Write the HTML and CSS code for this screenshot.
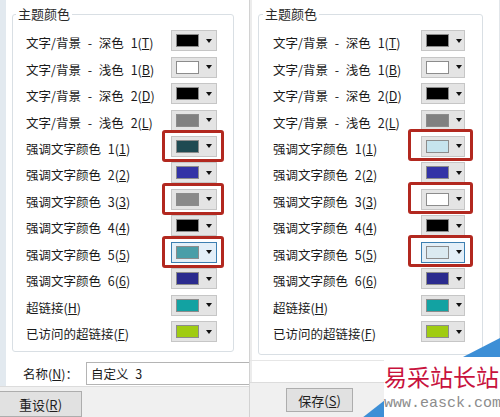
FILE: index.html
```html
<!DOCTYPE html>
<html lang="zh-CN">
<head>
    <meta charset="UTF-8">
    <title>主题颜色</title>
    <link rel="stylesheet" href="styles.css">
</head>
<body>
    <div class="screen">
        <div class="dialog dialog-left">
            <fieldset class="group">
                <legend>主题颜色</legend>
                <div class="row"><span class="label">文字/背景 - 深色 1(<u>T</u>)</span><span class="picker"><span class="chip c-black"></span><span class="arrow"></span></span></div>
                <div class="row"><span class="label">文字/背景 - 浅色 1(<u>B</u>)</span><span class="picker"><span class="chip c-white"></span><span class="arrow"></span></span></div>
                <div class="row"><span class="label">文字/背景 - 深色 2(<u>D</u>)</span><span class="picker"><span class="chip c-black"></span><span class="arrow"></span></span></div>
                <div class="row"><span class="label">文字/背景 - 浅色 2(<u>L</u>)</span><span class="picker"><span class="chip c-gray"></span><span class="arrow"></span></span></div>
                <div class="row"><span class="label">强调文字颜色 1(<u>1</u>)</span><span class="picker marked"><span class="chip c-slate"></span><span class="arrow"></span></span></div>
                <div class="row"><span class="label">强调文字颜色 2(<u>2</u>)</span><span class="picker"><span class="chip c-indigo"></span><span class="arrow"></span></span></div>
                <div class="row"><span class="label">强调文字颜色 3(<u>3</u>)</span><span class="picker marked"><span class="chip c-midgray"></span><span class="arrow"></span></span></div>
                <div class="row"><span class="label">强调文字颜色 4(<u>4</u>)</span><span class="picker"><span class="chip c-black"></span><span class="arrow"></span></span></div>
                <div class="row"><span class="label">强调文字颜色 5(<u>5</u>)</span><span class="picker marked focused"><span class="chip c-aqua"></span><span class="arrow"></span></span></div>
                <div class="row"><span class="label">强调文字颜色 6(<u>6</u>)</span><span class="picker"><span class="chip c-navy"></span><span class="arrow"></span></span></div>
                <div class="row"><span class="label">超链接(<u>H</u>)</span><span class="picker"><span class="chip c-teal"></span><span class="arrow"></span></span></div>
                <div class="row"><span class="label">已访问的超链接(<u>F</u>)</span><span class="picker"><span class="chip c-lime"></span><span class="arrow"></span></span></div>
            </fieldset>
            <div class="name-row">
                <span class="name-label">名称(<u>N</u>)：</span>
                <span class="name-input">自定义 3</span>
            </div>
            <div class="footer">
                <button class="btn btn-reset">重设(<u>R</u>)</button>
            </div>
        </div>

        <div class="dialog dialog-right">
            <fieldset class="group">
                <legend>主题颜色</legend>
                <div class="row"><span class="label">文字/背景 - 深色 1(<u>T</u>)</span><span class="picker"><span class="chip c-black"></span><span class="arrow"></span></span></div>
                <div class="row"><span class="label">文字/背景 - 浅色 1(<u>B</u>)</span><span class="picker"><span class="chip c-white"></span><span class="arrow"></span></span></div>
                <div class="row"><span class="label">文字/背景 - 深色 2(<u>D</u>)</span><span class="picker"><span class="chip c-black"></span><span class="arrow"></span></span></div>
                <div class="row"><span class="label">文字/背景 - 浅色 2(<u>L</u>)</span><span class="picker"><span class="chip c-gray"></span><span class="arrow"></span></span></div>
                <div class="row"><span class="label">强调文字颜色 1(<u>1</u>)</span><span class="picker marked"><span class="chip c-ice"></span><span class="arrow"></span></span></div>
                <div class="row"><span class="label">强调文字颜色 2(<u>2</u>)</span><span class="picker"><span class="chip c-indigo"></span><span class="arrow"></span></span></div>
                <div class="row"><span class="label">强调文字颜色 3(<u>3</u>)</span><span class="picker marked"><span class="chip c-white"></span><span class="arrow"></span></span></div>
                <div class="row"><span class="label">强调文字颜色 4(<u>4</u>)</span><span class="picker"><span class="chip c-black"></span><span class="arrow"></span></span></div>
                <div class="row"><span class="label">强调文字颜色 5(<u>5</u>)</span><span class="picker marked focused"><span class="chip c-mist"></span><span class="arrow"></span></span></div>
                <div class="row"><span class="label">强调文字颜色 6(<u>6</u>)</span><span class="picker"><span class="chip c-navy"></span><span class="arrow"></span></span></div>
                <div class="row"><span class="label">超链接(<u>H</u>)</span><span class="picker"><span class="chip c-teal"></span><span class="arrow"></span></span></div>
                <div class="row"><span class="label">已访问的超链接(<u>F</u>)</span><span class="picker"><span class="chip c-lime"></span><span class="arrow"></span></span></div>
            </fieldset>
            <div class="blank-row"></div>
            <div class="footer">
                <button class="btn btn-save">保存(<u>S</u>)</button>
            </div>
        </div>

        <div class="watermark">
            <svg class="wm-corners" width="140" height="80" viewBox="0 0 140 80">
                <polygon points="103,19 140,0 140,19" fill="#3d8fd6"/>
                <polygon points="2,80 25,62 25,80" fill="#3d8fd6"/>
            </svg>
            <div class="wm-text">
                <div class="wm-title">易采站长站</div>
                <div class="wm-url">www.easck.com</div>
            </div>
        </div>
    </div>
</body>
</html>
```

FILE: styles.css
```css
body {
    margin: 0;
    font-family: "Noto Sans CJK SC", "Liberation Sans", sans-serif;
    font-size: 12.5px;
    color: #1a1a1a;
    background-color: #fff;
}
.screen {
    position: relative;
    width: 500px;
    height: 417px;
    overflow: hidden;
    display: flex;
}
.dialog {
    width: 250px;
    height: 417px;
    box-sizing: border-box;
    display: flex;
    flex-direction: column;
    background-color: #fff;
}
.dialog-left {
    border-left: 6px solid #e2e9ef;
    border-right: 1px solid #d2d2d2;
    padding: 5px 15px 0 6px;
}
.dialog-right {
    border-left: 2px solid #ececec;
    border-right: 1px solid #e2e6ea;
    padding: 5px 16px 0 6px;
}
.group {
    margin: 0;
    border: 1px solid #d9dfe4;
    border-radius: 3px;
    padding: 6px 16px 5px 13px;
}
.dialog-right .group {
    padding: 6px 17px 8px 14px;
}
.group legend {
    margin-left: -10px;
    padding: 0 2px;
    line-height: 18px;
    font-size: 13px;
    color: #2a2a2a;
}
.row {
    display: flex;
    justify-content: space-between;
    align-items: center;
    height: 26.45px;
}
.label {
    white-space: nowrap;
    line-height: 16px;
    margin-top: 2px;
    word-spacing: 4px;
}
.label u {
    text-underline-offset: 1px;
}
.picker {
    position: relative;
    display: flex;
    align-items: center;
    box-sizing: border-box;
    width: 46px;
    height: 21px;
    padding-left: 4px;
    margin-top: -3px;
    border: 1px solid #c6c6c6;
    background-color: #e4e4e4;
}
.dialog-right .picker {
    width: 44px;
}
.picker.focused {
    border-color: #3c7fb1;
    background-color: #e3eff8;
}
.picker.marked::after {
    content: "";
    position: absolute;
    top: -7px;
    left: -10px;
    right: -8px;
    bottom: -6px;
    border: 3px solid #b2281f;
    border-radius: 3px;
}
.dialog-right .picker.marked::after {
    left: -14px;
    right: -9px;
    top: -8px;
    bottom: -5px;
}
.chip {
    width: 21px;
    height: 11px;
    border: 1px solid #8c8c8c;
}
.arrow {
    margin-left: 7px;
    width: 0;
    height: 0;
    border-left: 3.5px solid transparent;
    border-right: 3.5px solid transparent;
    border-top: 4px solid #111;
}
.c-black { background-color: #000; }
.c-white { background-color: #fff; }
.c-gray { background-color: #808080; }
.c-slate { background-color: #1f4a52; }
.c-indigo { background-color: #3333a6; }
.c-midgray { background-color: #8a8a8a; }
.c-aqua { background-color: #4a9ea8; }
.c-navy { background-color: #2b2b8e; }
.c-teal { background-color: #12a2a2; }
.c-lime { background-color: #a0cc12; }
.c-ice { background-color: #c6e4ee; }
.c-mist { background-color: #dbeaf1; }

.name-row {
    display: flex;
    align-items: center;
    height: 23px;
    margin: 10px -15px 0 0;
}
.name-label {
    margin-left: 11px;
    width: 63px;
    white-space: nowrap;
}
.name-input {
    flex: 1;
    height: 23px;
    box-sizing: border-box;
    border: 1px solid #b4b4b4;
    border-right: none;
    padding: 2px 4px;
    line-height: 17px;
    word-spacing: 4px;
}
.blank-row {
    height: 21px;
    margin: 5px -16px 0 -8px;
    border-top: 1px solid #e6e6e6;
}
.footer {
    flex: 1;
    margin: 1px -15px 0 -12px;
    border-top: 1px solid #dcdcdc;
    background-color: #f0f0f0;
    padding-top: 4px;
}
.dialog-right .footer {
    margin: 0 -16px 0 -8px;
    padding-top: 5px;
}
.btn {
    font-family: inherit;
    font-size: 13px;
    color: #1e1e1e;
    height: 26px;
    border: 1px solid #adadad;
    background-color: #e1e1e1;
    padding: 0;
}
.btn-reset {
    width: 83px;
    margin-left: -1px;
}
.btn-save {
    width: 67px;
    height: 24px;
    margin-left: 36px;
}
.watermark {
    position: absolute;
    left: 360px;
    top: 338px;
    width: 140px;
    height: 79px;
}
.wm-corners {
    position: absolute;
    left: 0;
    top: 0;
}
.wm-text {
    position: absolute;
    left: 24px;
    top: 19px;
    right: 0;
    bottom: 0;
    background-color: #fff;
}
.wm-title {
    margin-top: 6px;
    font-size: 23px;
    line-height: 26px;
    color: #c8123d;
    white-space: nowrap;
}
.wm-url {
    margin-top: 6px;
    font-family: "Liberation Mono", monospace;
    font-size: 15px;
    line-height: 17px;
    color: #8c8c8c;
    white-space: nowrap;
}
```
